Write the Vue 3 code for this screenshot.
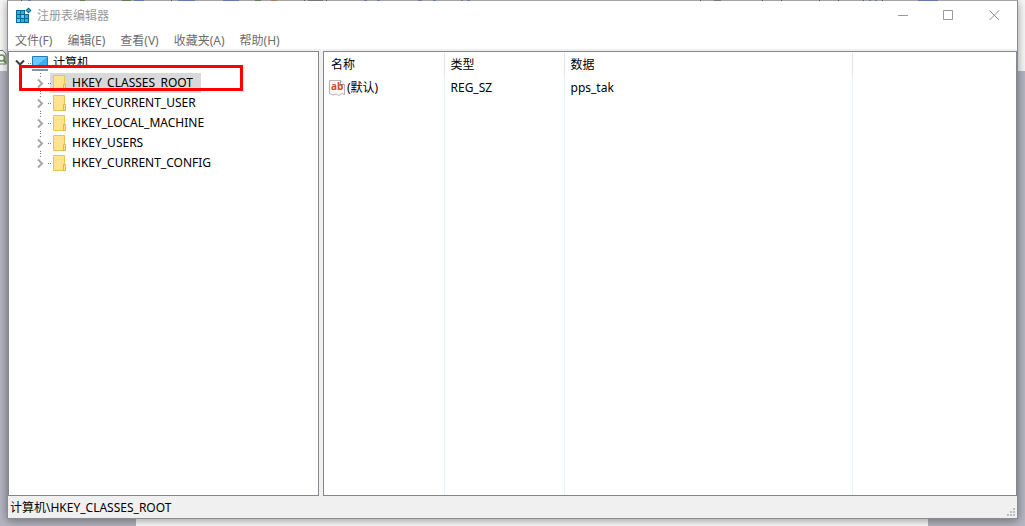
<script setup>
import { ref } from 'vue'

const menus = ['文件(F)', '编辑(E)', '查看(V)', '收藏夹(A)', '帮助(H)']
const hives = [
  'HKEY_CLASSES_ROOT',
  'HKEY_CURRENT_USER',
  'HKEY_LOCAL_MACHINE',
  'HKEY_USERS',
  'HKEY_CURRENT_CONFIG'
]
const selected = ref(hives[0])
const values = [{ name: '(默认)', type: 'REG_SZ', data: 'pps_tak' }]
</script>

<template>
  <div class="desktop">
    <div class="backdrop" aria-hidden="true">
      <div class="ribbon">
        <svg class="find" width="8" height="18" viewBox="0 0 8 18">
          <path d="M0 1.500H3L6 5V15H0" fill="#fff" stroke="#777" />
          <circle cx="1.500" cy="9" r="3" fill="none" stroke="#6a9a55" stroke-width="1.500" />
          <path d="M3.500 11L6 14" stroke="#6a9a55" stroke-width="2" />
        </svg>
      </div>
      <div class="paper"></div>
    </div>
    <svg class="sliver" height="1" width="940" aria-hidden="true">
      <path d="M21 .5H22M171 .5H172M304 .5H305M326 .5H327M700 .5H701M762 .5H763M781 .5H782M819 .5H820M838 .5H839M863 .5H864M882 .5H883" stroke="#555" />
      <path d="M308 .5H323M714 .5H721" stroke="#777" stroke-width="1" />
      <path d="M80 .5H85M122 .5H131M255 .5H261" stroke="#647c49" />
      <path d="M271 .5H277" stroke="#b07a5c" />
      <path d="M28 .5H31M134 .5H144M178 .5H195M223 .5H239M364 .5H367M377 .5H380M418 .5H422M433 .5H436M461 .5H463M467 .5H470M869 .5H871M875 .5H877M918 .5H938" stroke="#6679ab" />
    </svg>

    <main class="window">
      <header class="titlebar">
        <svg width="17" height="17" viewBox="0 0 17 17" aria-hidden="true">
          <path d="M1 3H10V7H14V16H1Z" fill="#086a91" />
          <path d="M2 4H5V7H2ZM6 4H9V7H6ZM2 8H5V11H2ZM6 8H9V11H6ZM10 8H13V11H10ZM2 12H5V15H2ZM6 12H9V15H6ZM10 12H13V15H10Z" fill="#28b2e7" />
          <path d="M6 8H9V11H6ZM2 12H5V15H2Z" fill="#64cff5" />
          <path d="M13.500 .5L16.500 3.500L13.500 6.500L10.500 3.500Z" fill="#086a91" />
          <path d="M13.500 2L15 3.500L13.500 5L12 3.500Z" fill="#35b9e9" />
        </svg>
        <h1>注册表编辑器</h1>
        <div class="controls">
          <button aria-label="最小化">
            <svg width="11" height="11"><path d="M1 5.500H11" stroke="#999" /></svg>
          </button>
          <button aria-label="最大化">
            <svg width="11" height="11"><path d="M.5 .5H9.500V9.500H.5Z" fill="none" stroke="#999" /></svg>
          </button>
          <button aria-label="关闭">
            <svg width="11" height="11"><path d="M.5 .5L10 10M10 .5L.5 10" stroke="#8e8e8e" /></svg>
          </button>
        </div>
      </header>

      <nav class="menubar">
        <button v-for="m in menus" :key="m">{{ m }}</button>
      </nav>

      <div class="panes">
        <section class="tree" aria-label="注册表项">
          <div class="root">
            <button class="expander" aria-label="折叠">
              <svg width="11" height="8"><path d="M1 1.500L5 5.500L9 1.500" fill="none" stroke="#404040" stroke-width="2" /></svg>
            </button>
            <svg class="computer" width="20" height="16" viewBox="0 0 20 16" aria-hidden="true">
              <path d="M0 8.500H1M2 8.500H3" stroke="#777" />
              <path d="M4.500 1.500H19.500V12.500H4.500Z" fill="#35adf7" stroke="#267caf" />
              <path d="M5 2H19L7 12H5Z" fill="#6bc9ff" />
              <path d="M4 15H20" stroke="#8594a8" stroke-width="2" />
            </svg>
            <span>计算机</span>
          </div>
          <ul>
            <li v-for="(h, i) in hives" :key="h">
              <button class="expander" :aria-label="'展开 ' + h">
                <svg width="20" height="20" viewBox="0 0 20 20">
                  <path d="M10 .5H11M10 3.500H11M18 10.500H19" stroke="#777" />
                  <path v-if="i < hives.length - 1" d="M10 18.500H11" stroke="#777" />
                  <path d="M8 6.500L12 10.500L8 14.500" fill="none" stroke="#a6a6a6" stroke-width="2" />
                </svg>
              </button>
              <button class="key" :class="{ selected: selected === h }" @click="selected = h">
                <svg width="18" height="18" viewBox="0 0 18 18" aria-hidden="true">
                  <path d="M0 9.500H1" stroke="#777" />
                  <path d="M3.500 1.500H14.500V16.500H3.500Z" fill="#ffe391" stroke="#e9c452" />
                  <path d="M13.500 10.500H15.500V16.500H13.500Z" fill="#ffe391" stroke="#e2b73c" />
                </svg>
                <span>{{ h }}</span>
              </button>
            </li>
          </ul>
        </section>

        <section class="list">
          <table>
            <colgroup><col class="c-name" /><col class="c-type" /><col class="c-data" /><col /></colgroup>
            <thead>
              <tr><th>名称</th><th>类型</th><th>数据</th><td></td></tr>
            </thead>
            <tbody>
              <tr v-for="v in values" :key="v.name">
                <td>
                  <div class="value">
                    <svg width="16" height="16" viewBox="0 0 16 16" aria-hidden="true">
                      <path d="M.5 .5H11.500L15.500 4.500V14.500L13 13.500L10 15.500L7 14L4 15L.5 13.500Z" fill="#fafafa" stroke="#b5b5b5" />
                      <path d="M11.500 .5V4.500H15.500" fill="#fff" stroke="#999" />
                      <text class="glyph" x="2" y="10">ab</text>
                    </svg>
                    <span>{{ v.name }}</span>
                  </div>
                </td>
                <td>{{ v.type }}</td>
                <td>{{ v.data }}</td>
                <td></td>
              </tr>
              <tr class="filler"><td></td><td></td><td></td><td></td></tr>
            </tbody>
          </table>
        </section>
      </div>

      <footer class="status">
        <span>计算机\{{ selected }}</span>
        <svg width="8" height="8" aria-hidden="true">
          <path d="M6 0H8V2H6ZM3 3H5V5H3ZM6 3H8V5H6ZM0 6H2V8H0ZM3 6H5V8H3ZM6 6H8V8H6Z" fill="#bcbcbc" />
        </svg>
      </footer>
    </main>
    <div class="marker" aria-hidden="true"></div>
  </div>
</template>

<style>
body { margin: 0; }
</style>

<style scoped>
.desktop {
  position: relative;
  display: flex;
  box-sizing: border-box;
  height: 100vh;
  padding: 0 7px 7px;
  overflow: hidden;
  background: #b5b6c2;
  color: #000;
  font-family: "Noto Sans", "Noto Sans CJK SC", sans-serif;
  font-size: 12px;
  line-height: 16px;
}
button {
  margin: 0;
  padding: 0;
  border: 0;
  background: none;
  color: inherit;
  font: inherit;
}
svg { display: block; flex: none; }
.backdrop {
  position: absolute;
  inset: 0;
  display: flex;
  flex-direction: column;
  justify-content: space-between;
}
.ribbon {
  height: 71px;
  box-sizing: border-box;
  padding-top: 49px;
  background: #f8f8f8;
}
.paper {
  height: 20px;
  margin: 0 97px 0 136px;
  background: #fff;
}
.sliver { position: absolute; top: 0; left: 0; z-index: 2; }
.window {
  position: relative;
  display: flex;
  flex: 1;
  flex-direction: column;
  min-width: 0;
  border: 1px solid #8c8d93;
  border-top-color: #a5a5a5;
  background: #fff;
  box-shadow: 0 2px 9px rgba(0, 0, 0, 0.4);
}
.titlebar {
  display: flex;
  align-items: center;
  height: 29px;
  padding-left: 7px;
  color: #999;
}
h1 {
  flex: 1;
  margin: 0 0 0 5px;
  font-size: 12px;
  font-weight: 400;
}
.controls { display: flex; }
.controls button {
  display: flex;
  align-items: center;
  justify-content: center;
  width: 46px;
  height: 29px;
}
.menubar {
  display: flex;
  box-sizing: border-box;
  height: 19px;
  padding-top: 2px;
  color: #6d6d6d;
}
.menubar button { padding: 0 8px 0 7px; }
.panes {
  display: flex;
  flex: 1;
  gap: 4px;
  min-height: 0;
  padding-top: 2px;
  background: #f0f0f0;
}
.tree, .list {
  box-sizing: border-box;
  padding-top: 1px;
  border: 1px solid #828790;
  background: #fff;
}
.tree { width: 311px; }
.list { flex: 1; min-width: 0; }
.root {
  display: flex;
  align-items: center;
  height: 20px;
  padding-left: 6px;
}
.computer { margin: 0 5px 0 2px; }
ul { margin: 0; padding: 0; list-style: none; }
li { display: flex; height: 20px; padding-left: 21px; }
.key {
  display: flex;
  align-items: center;
  height: 20px;
  padding-right: 8px;
}
.key span { padding-left: 4px; }
.key.selected { background: #d9d9d9; }
table {
  width: 100%;
  height: 100%;
  border-collapse: collapse;
  table-layout: fixed;
}
.c-name, .c-type { width: 120px; }
.c-data { width: 288px; }
th, td {
  height: 22px;
  padding: 0 6px;
  border-right: 1px solid #e9f1fb;
  text-align: left;
  font-weight: 400;
  white-space: nowrap;
}
th:first-child, td:first-child { padding-left: 7px; }
thead th, thead td { height: 24px; border-color: #e5e5e5; }
th:last-child, td:last-child { border-right: 0; }
.filler td { height: auto; }
.value { display: flex; align-items: center; gap: 2px; margin-left: -2px; }
.glyph { fill: #d54a28; font-family: "Open Sans", sans-serif; font-size: 10px; font-weight: 700; }
.status {
  display: flex;
  align-items: center;
  justify-content: space-between;
  box-sizing: border-box;
  height: 22px;
  padding: 2px 2px 0;
  background: #f0f0f0;
}
.status svg { align-self: flex-end; margin-bottom: 2px; }
.marker {
  position: absolute;
  top: 65px;
  left: 19px;
  box-sizing: border-box;
  width: 224px;
  height: 26px;
  border: 3px solid #f00;
}
</style>
